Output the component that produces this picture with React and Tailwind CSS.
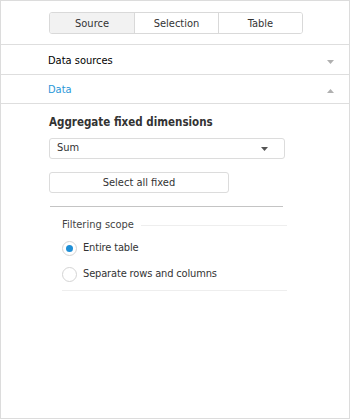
import React, { useState } from 'react';

const font = { fontFamily: '"DejaVu Sans Condensed", "Noto Sans", sans-serif' };

const Arrow = ({ up }) => (
  <svg width="7" height="4" viewBox="0 0 7 4" className="text-[#b0b0b0]">
    {up ? <path d="M0 4 L3.5 0 L7 4 Z" fill="currentColor" /> : <path d="M0 0 L7 0 L3.5 4 Z" fill="currentColor" />}
  </svg>
);

const Radio = ({ checked, label, onClick }) => (
  <label className="flex items-center h-[26px] cursor-pointer" onClick={onClick}>
    <span className="w-[15px] h-[15px] rounded-full border border-[#d4d4d4] bg-white flex items-center justify-center">
      {checked && <span className="w-[7px] h-[7px] rounded-full bg-[#1f8fd6]" />}
    </span>
    <span className="ml-[6px] text-[11px] text-[#333] tracking-[-0.15px]">{label}</span>
  </label>
);

const App = () => {
  const [tab, setTab] = useState('Source');
  const [scope, setScope] = useState('entire');
  const tabs = ['Source', 'Selection', 'Table'];

  return (
    <div className="w-[350px] h-[419px] bg-white border border-[#dcdcdc] text-[11px] text-[#333]" style={font}>
      {/* Tabs */}
      <div className="h-[43px] flex items-center justify-center pt-[1px]">
        <div className="flex border border-[#d9d9d9] rounded-[3px] overflow-hidden ml-[2px]">
          {tabs.map((t, i) => (
            <button
              key={t}
              onClick={() => setTab(t)}
              className={`w-[84px] h-[20px] text-[11px] leading-[21px] text-[#333] ${i > 0 ? 'border-l border-[#d9d9d9]' : ''} ${tab === t ? 'bg-[#f2f2f2]' : 'bg-white'}`}
            >
              {t}
            </button>
          ))}
        </div>
      </div>

      {/* Panels */}
      <div className="border-t border-[#dedede] h-[30px] flex items-center justify-between pl-[47px] pr-[15px] pt-[4px]">
        <span className="text-black">Data sources</span>
        <Arrow />
      </div>
      <div className="border-t border-[#dedede] h-[29px] flex items-center justify-between pl-[47px] pr-[15px] pt-[3px]">
        <span className="text-[#2a97d8]">Data</span>
        <Arrow up />
      </div>

      <div className="border-t border-[#dedede] pl-[48px] pt-[10px]">
        <div className="font-bold text-[11.5px] text-[#333] leading-[16px]">Aggregate fixed dimensions</div>

        <div className="mt-[8px] w-[236px] h-[21px] border border-[#dcdcdc] rounded-[3px] flex items-center justify-between pl-[7px] pr-[16px]">
          <span>Sum</span>
          <svg width="7" height="4" viewBox="0 0 7 4"><path d="M0 0 L7 0 L3.5 4 Z" fill="#555" /></svg>
        </div>

        <button className="mt-[13px] w-[180px] h-[21px] border border-[#dcdcdc] rounded-[3px] bg-white text-[11px] text-[#333] leading-[19px]">
          Select all fixed
        </button>

        <div className="mt-[13px] w-[233px] ml-[1px] border-t border-[#c4c4c4]" />

        <div className="ml-[13px] w-[225px] mt-[10px]">
          <div className="flex items-center">
            <span className="text-[#444]">Filtering scope</span>
            <span className="flex-1 ml-[7px] border-t border-[#eeeeee]" />
          </div>
          <div className="mt-[2px]">
            <Radio checked={scope === 'entire'} label="Entire table" onClick={() => setScope('entire')} />
            <Radio checked={scope === 'separate'} label="Separate rows and columns" onClick={() => setScope('separate')} />
          </div>
          <div className="mt-[2px] border-t border-[#eeeeee]" />
        </div>
      </div>
    </div>
  );
};

export default App;
